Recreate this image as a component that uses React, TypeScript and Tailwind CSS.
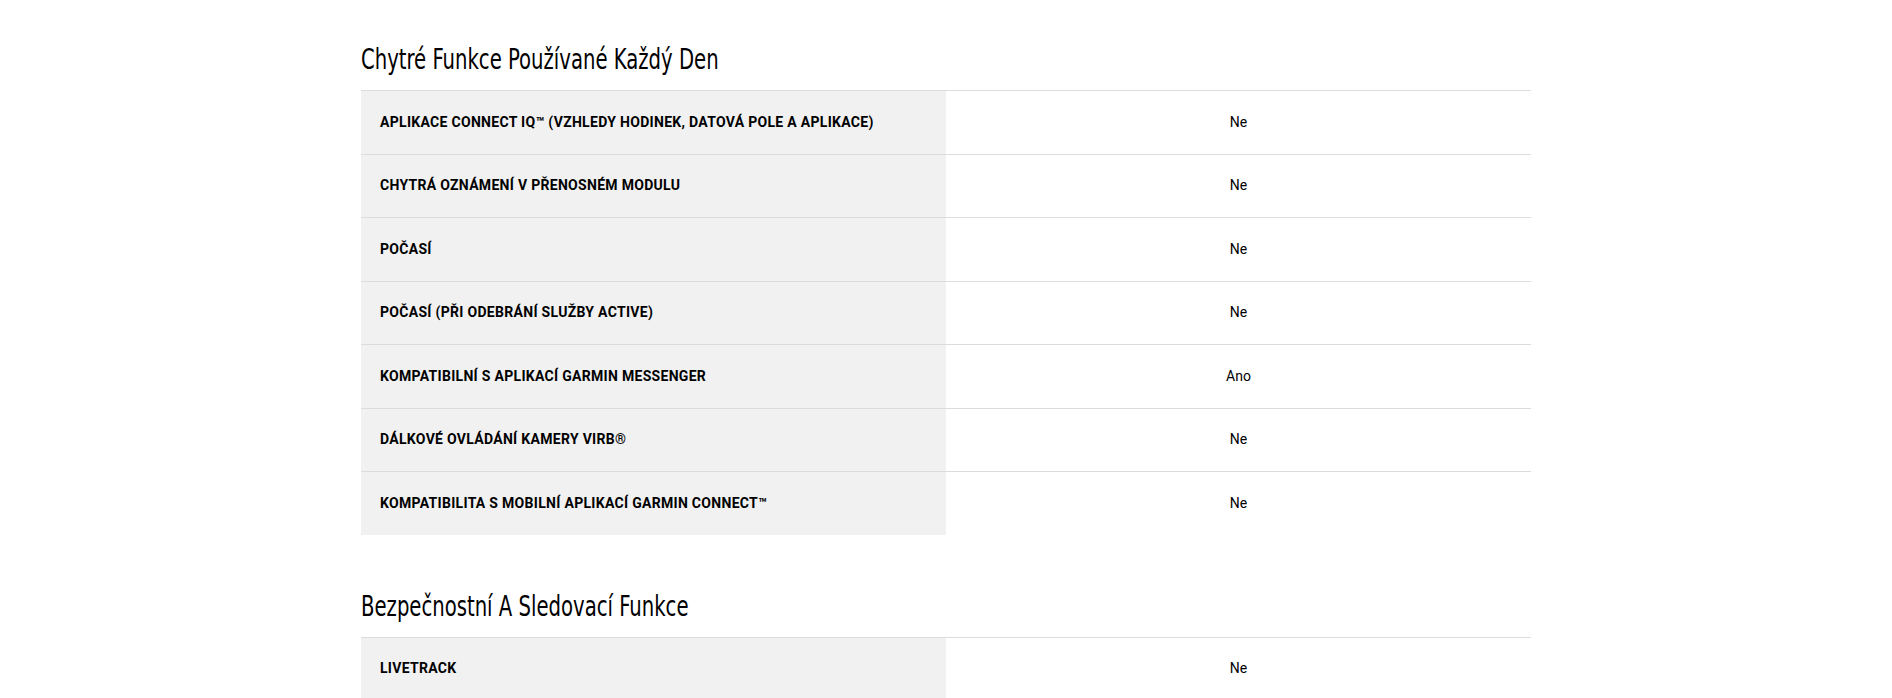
const sections = [
  {
    title: 'Chytré Funkce Používané Každý Den',
    rows: [
      ['APLIKACE CONNECT IQ™ (VZHLEDY HODINEK, DATOVÁ POLE A APLIKACE)', 'Ne'],
      ['CHYTRÁ OZNÁMENÍ V PŘENOSNÉM MODULU', 'Ne'],
      ['POČASÍ', 'Ne'],
      ['POČASÍ (PŘI ODEBRÁNÍ SLUŽBY ACTIVE)', 'Ne'],
      ['KOMPATIBILNÍ S APLIKACÍ GARMIN MESSENGER', 'Ano'],
      ['DÁLKOVÉ OVLÁDÁNÍ KAMERY VIRB®', 'Ne'],
      ['KOMPATIBILITA S MOBILNÍ APLIKACÍ GARMIN CONNECT™', 'Ne'],
    ],
  },
  {
    title: 'Bezpečnostní A Sledovací Funkce',
    rows: [['LIVETRACK', 'Ne']],
  },
];

const App = () => {
  return (
    <div className="bg-white h-[698px] overflow-hidden pt-[40px]">
      <div className="w-[1170px] mx-auto">
        {sections.map((section, i) => (
          <section key={i} className="mb-[52px]">
            {/* Heading */}
            <h2 className="h-[40px] mb-[10px] whitespace-nowrap">
              <span className="inline-block origin-left scale-x-[0.78] font-['DejaVu_Sans_Condensed','DejaVu_Sans',sans-serif] text-[28px] leading-[40px] text-black">
                {section.title}
              </span>
            </h2>
            {section.rows.map(([label, value], index) => (
              <div key={index} className="grid grid-cols-2 h-[63.5px] border-t border-[#dcdcdc]">
                <div className="bg-[#f1f1f1] flex items-center pl-[19px] font-['Roboto',sans-serif] font-bold text-[14px] tracking-[0.3px] text-black">
                  {label}
                </div>
                <div className="flex items-center justify-center font-['Roboto',sans-serif] text-[14px] text-black">
                  {value}
                </div>
              </div>
            ))}
          </section>
        ))}
      </div>
    </div>
  );
};

export default App;
